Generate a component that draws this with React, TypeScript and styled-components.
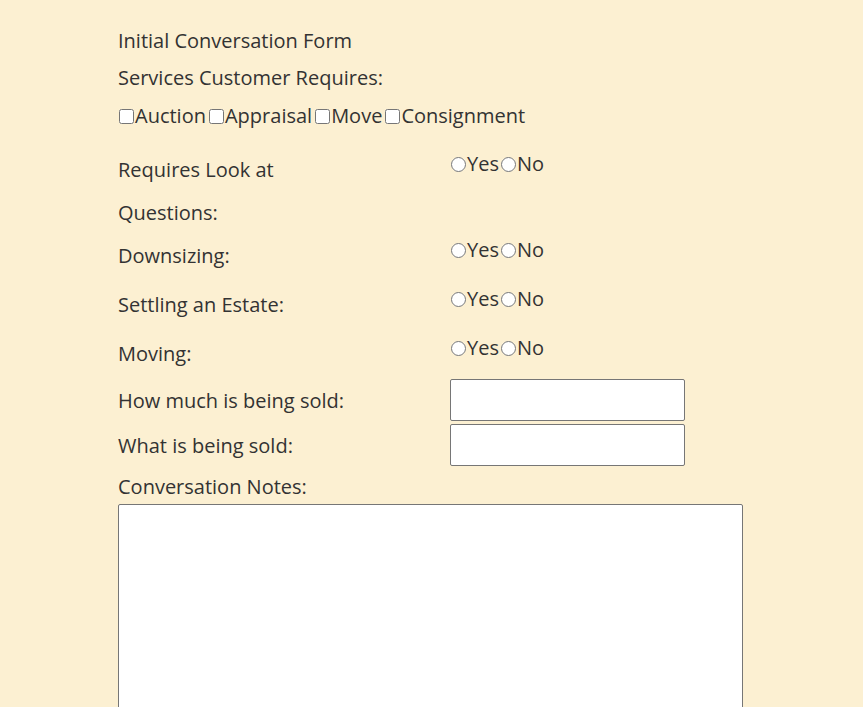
import React from "react";
import styled, { createGlobalStyle } from "styled-components";

const Global = createGlobalStyle`
  html, body { margin: 0; padding: 0; background: #fcf0d2; }
  body { font-family: "Open Sans", "DejaVu Sans", sans-serif; color: #333; }
`;

const Page = styled.form`
  padding: 0 0 0 118px;
  display: flex;
  flex-direction: column;
  width: 625px;
`;

const Line = styled.div<{ $mt: number }>`
  margin-top: ${(p) => p.$mt}px;
  font-size: 20px;
  line-height: 28px;
  display: flex;
  align-items: center;
`;

const Row = styled.div<{ $mt: number }>`
  margin-top: ${(p) => p.$mt}px;
  display: grid;
  grid-template-columns: 332px 1fr;
  align-items: start;
  font-size: 20px;
  line-height: 28px;
`;

const Label = styled.div<{ $pt: number }>`
  padding-top: ${(p) => p.$pt}px;
`;

const Options = styled.div`
  display: flex;
  align-items: center;
`;

const Check = styled.input.attrs({ type: "checkbox" })`
  margin: 0 1px 0 3px;
  width: 15px;
  height: 15px;
  &:first-child { margin-left: 1px; }
`;

const Radio = styled.input.attrs({ type: "radio" })`
  margin: 0 1px 0 2px;
  width: 15px;
  height: 15px;
  &:first-child { margin-left: 1px; }
`;

const TextBox = styled.input.attrs({ type: "text" })`
  width: 235px;
  height: 42px;
  box-sizing: border-box;
  border: 1px solid #767676;
  border-radius: 2px;
  background: #fff;
`;

const Notes = styled.textarea`
  margin-top: 3px;
  width: 625px;
  height: 260px;
  box-sizing: border-box;
  border: 1px solid #767676;
  border-radius: 2px;
  background: #fff;
  resize: none;
`;

const YesNo = ({ name }: { name: string }) => (
  <Options>
    <Radio name={name} />Yes<Radio name={name} />No
  </Options>
);

export default function App() {
  return (
    <>
      <Global />
      <Page>
        <Line $mt={27}>Initial Conversation Form</Line>
        <Line $mt={9}>Services Customer Requires:</Line>
        <Line $mt={10}>
          <Check />Auction<Check />Appraisal<Check />Move<Check />Consignment
        </Line>
        <Row $mt={20}>
          <Label $pt={6}>Requires Look at</Label>
          <YesNo name="look" />
        </Row>
        <Line $mt={15}>Questions:</Line>
        <Row $mt={9}>
          <Label $pt={6}>Downsizing:</Label>
          <YesNo name="down" />
        </Row>
        <Row $mt={15}>
          <Label $pt={6}>Settling an Estate:</Label>
          <YesNo name="estate" />
        </Row>
        <Row $mt={15}>
          <Label $pt={6}>Moving:</Label>
          <YesNo name="moving" />
        </Row>
        <Row $mt={11}>
          <Label $pt={8}>How much is being sold:</Label>
          <TextBox />
        </Row>
        <Row $mt={3}>
          <Label $pt={8}>What is being sold:</Label>
          <TextBox />
        </Row>
        <Line $mt={7}>Conversation Notes:</Line>
        <Notes />
      </Page>
    </>
  );
}
